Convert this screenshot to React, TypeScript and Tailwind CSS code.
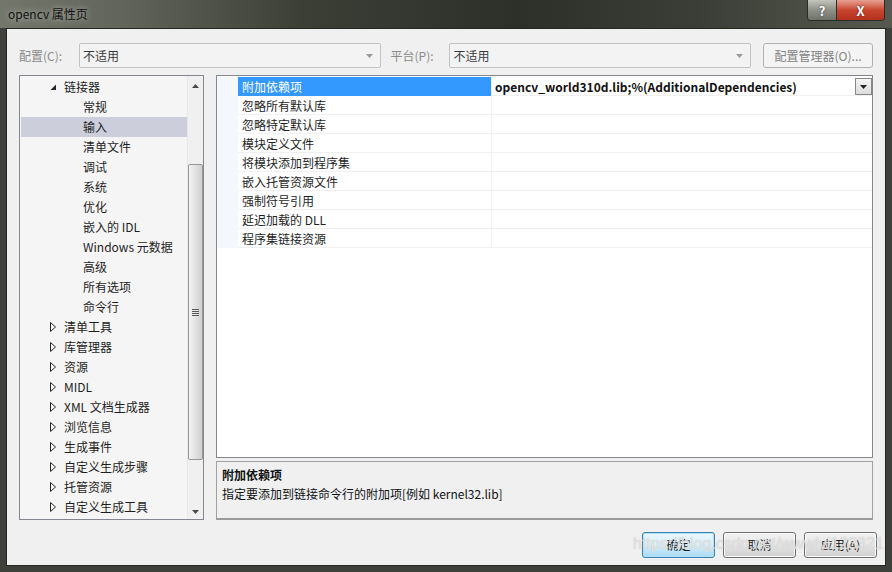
import React from "react";

type TreeItem = { label: string; level: 0 | 1; expanded?: boolean; selected?: boolean };

const tree: TreeItem[] = [
  { label: "链接器", level: 0, expanded: true },
  { label: "常规", level: 1 },
  { label: "输入", level: 1, selected: true },
  { label: "清单文件", level: 1 },
  { label: "调试", level: 1 },
  { label: "系统", level: 1 },
  { label: "优化", level: 1 },
  { label: "嵌入的 IDL", level: 1 },
  { label: "Windows 元数据", level: 1 },
  { label: "高级", level: 1 },
  { label: "所有选项", level: 1 },
  { label: "命令行", level: 1 },
  { label: "清单工具", level: 0 },
  { label: "库管理器", level: 0 },
  { label: "资源", level: 0 },
  { label: "MIDL", level: 0 },
  { label: "XML 文档生成器", level: 0 },
  { label: "浏览信息", level: 0 },
  { label: "生成事件", level: 0 },
  { label: "自定义生成步骤", level: 0 },
  { label: "托管资源", level: 0 },
  { label: "自定义生成工具", level: 0 },
];

const props = [
  "附加依赖项",
  "忽略所有默认库",
  "忽略特定默认库",
  "模块定义文件",
  "将模块添加到程序集",
  "嵌入托管资源文件",
  "强制符号引用",
  "延迟加载的 DLL",
  "程序集链接资源",
];

const DownArrow = ({ color = "#7a7a7a" }: { color?: string }) => (
  <svg width="7" height="4" viewBox="0 0 7 4">
    <polygon points="0,0 7,0 3.5,4" fill={color} />
  </svg>
);

const Combo = ({ width }: { width: string }) => (
  <div
    className={`${width} h-[25px] flex items-center justify-between pl-[3px] pr-[7px] border border-[#c3c3c3] rounded-[2px] bg-[#f3f3f3] text-[#3a3a3a]`}
  >
    <span>不适用</span>
    <DownArrow color="#9a9a9a" />
  </div>
);

const Expander = ({ expanded }: { expanded?: boolean }) =>
  expanded ? (
    <svg width="7" height="7" viewBox="0 0 7 7">
      <polygon points="6,0.5 6,6 0.5,6" fill="#262626" />
    </svg>
  ) : (
    <svg width="6" height="10" viewBox="0 0 6 10">
      <polygon points="0.5,0.5 5.5,5 0.5,9.5" fill="none" stroke="#262626" strokeWidth="1" />
    </svg>
  );

const Button = ({ label, focused }: { label: string; focused?: boolean }) => (
  <div
    className={`w-[73px] h-[26px] flex items-center justify-center rounded-[3px] border text-[#1a1a1a] ${
      focused
        ? "border-[#3c7fb1] bg-gradient-to-b from-[#eaf6fd] via-[#d9f0fc] to-[#a7d9f5] shadow-[inset_0_0_0_1px_#aee1fb]"
        : "border-[#707070] bg-gradient-to-b from-[#f2f2f2] via-[#e6e6e6] to-[#cfcfcf] shadow-[inset_0_0_0_1px_#fcfcfc]"
    }`}
  >
    {label}
  </div>
);

export default function App() {
  return (
    <div className="w-[892px] h-[572px] flex flex-col bg-[#3e4139] font-['Noto_Sans_CJK_SC',sans-serif] text-[12px] leading-none relative overflow-hidden">
      {/* title bar */}
      <div className="h-[28px] flex justify-between bg-[linear-gradient(90deg,#72766b_0%,#60645a_14%,#3c3f36_34%,#2d3029_58%,#3b3e36_78%,#56594f_100%)]">
        <div className="pl-[8px] pt-[8px] text-[12px] text-[#111] [text-shadow:0_0_6px_#c8cbc2]">opencv 属性页</div>
        <div className="flex h-[21px] mr-[7px] rounded-b-[4px] overflow-hidden border border-t-0 border-[#2a2c27]">
          <div className="w-[29px] flex items-center justify-center bg-gradient-to-b from-[#c3c5bd] via-[#8e9188] to-[#6f7269] text-white font-bold text-[13px] [text-shadow:0_0_2px_#333] border-r border-[#2a2c27]">
            ?
          </div>
          <div className="w-[47px] flex items-center justify-center bg-gradient-to-b from-[#e6a093] via-[#c9452f] to-[#b2301d] text-white font-bold text-[13px] [text-shadow:0_0_2px_#5a1208]">
            X
          </div>
        </div>
      </div>

      {/* client area */}
      <div className="flex-1 mx-[6px] mb-[6px] border border-[#25271f] bg-[#f0f0f0] flex flex-col px-[12px] relative">
        {/* toolbar */}
        <div className="mt-[14px] flex items-center">
          <div className="w-[60px] text-[#8a8a8a]">配置(C):</div>
          <Combo width="w-[302px]" />
          <div className="ml-[10px] w-[59px] text-[#8a8a8a]">平台(P):</div>
          <Combo width="w-[302px]" />
          <div className="ml-[12px] w-[110px] h-[25px] flex items-center justify-center border border-[#adb2b5] rounded-[3px] bg-[#f4f4f4] text-[#838383]">
            配置管理器(O)...
          </div>
        </div>

        {/* main */}
        <div className="mt-[7px] flex gap-[12px] h-[445px]">
          {/* tree */}
          <div className="w-[185px] border border-[#828790] bg-[#f5f5f5] flex">
            <div className="flex-1 pt-[1px] pl-[1px]">
              {tree.map((t) => (
                <div
                  key={t.label}
                  className={`h-[20px] flex items-center text-[#1e1e1e] ${t.selected ? "bg-[#cccedb]" : ""}`}
                >
                  {t.level === 0 ? (
                    <>
                      <div className="ml-[28px] w-[8px] flex justify-center">
                        <Expander expanded={t.expanded} />
                      </div>
                      <span className="ml-[7px]">{t.label}</span>
                    </>
                  ) : (
                    <span className="ml-[62px]">{t.label}</span>
                  )}
                </div>
              ))}
            </div>
            {/* scrollbar */}
            <div className="w-[16px] bg-[#f0f0f0] border-l border-[#e8e8e8] flex flex-col items-center">
              <div className="h-[13px] mt-[3px] flex items-center justify-center">
                <svg width="7" height="4" viewBox="0 0 7 4">
                  <polygon points="0,4 7,4 3.5,0" fill="#4a4a4a" />
                </svg>
              </div>
              <div className="mt-[72px] w-[15px] h-[296px] rounded-[2px] border border-[#979797] bg-gradient-to-r from-[#f3f3f3] via-[#e2e2e2] to-[#d0d0d0] flex items-center justify-center">
                <div className="flex flex-col gap-[1px]">
                  <div className="w-[7px] h-[1px] bg-[#5a5a5a]" />
                  <div className="w-[7px] h-[1px] bg-[#5a5a5a]" />
                  <div className="w-[7px] h-[1px] bg-[#5a5a5a]" />
                  <div className="w-[7px] h-[1px] bg-[#5a5a5a]" />
                </div>
              </div>
              <div className="mt-auto mb-[5px] flex items-center justify-center">
                <DownArrow color="#4a4a4a" />
              </div>
            </div>
          </div>

          {/* right column */}
          <div className="flex-1 flex flex-col">
            <div className="h-[384px] border border-[#828790] bg-white">
              <div className="pt-[1px]">
                {props.map((p, i) => (
                  <div key={p} className="h-[19px] flex">
                    <div className="w-[21px] bg-[#f4f7fc]" />
                    <div
                      className={`w-[253px] flex items-center pl-[4px] pt-[1px] border-b ${
                        i === 0 ? "bg-[#3399ff] text-white border-[#3399ff]" : "text-[#1e1e1e] border-[#f0f0f0]"
                      }`}
                    >
                      {p}
                    </div>
                    <div className="flex-1 flex items-center border-l border-b border-[#f0f0f0] pl-[3px] pt-[1px]">
                      {i === 0 && (
                        <>
                          <span className="font-bold text-[#111]">opencv_world310d.lib;%(AdditionalDependencies)</span>
                          <div className="ml-auto w-[17px] h-[17px] border border-[#888] bg-gradient-to-b from-[#f5f5f5] to-[#dcdcdc] flex items-center justify-center">
                            <DownArrow color="#222" />
                          </div>
                        </>
                      )}
                    </div>
                  </div>
                ))}
              </div>
            </div>
            <div className="mt-[3px] h-[59px] border border-[#a0a0a0] border-b-[2px] border-b-[#9a9a9a] bg-[#f0f0f0] px-[5px] pt-[4px] text-[#111]">
              <div className="h-[18px] flex items-center font-bold">附加依赖项</div>
              <div className="h-[19px] flex items-center">指定要添加到链接命令行的附加项[例如 kernel32.lib]</div>
            </div>
          </div>
        </div>

        {/* buttons */}
        <div className="mt-[12px] -mr-[4px] flex justify-end gap-[8px]">
          <Button label="确定" focused />
          <Button label="取消" />
          <Button label="应用(A)" />
        </div>

        <div className="absolute left-[626px] top-[507px] font-['Liberation_Sans',sans-serif] text-[16px] text-white/60 [text-shadow:0_0_1px_#b0b0b0] pointer-events-none">
          https://blog.csdn.net/wwwlyj123321
        </div>
      </div>
    </div>
  );
}
